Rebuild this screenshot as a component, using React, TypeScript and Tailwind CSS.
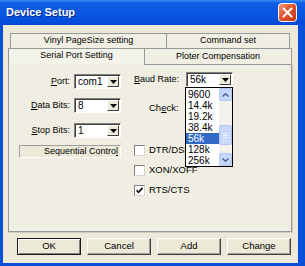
import React from "react";

const Combo = ({ value, width = "w-[47px]" }: { value: string; width?: string }) => (
  <div className={`flex h-[15px] ${width} items-stretch border border-t-[#808080] border-l-[#808080] border-b-white border-r-white bg-white shadow-[inset_1px_1px_0_#404040]`}>
    <div className="flex flex-1 items-center pl-[3px] text-[10px] leading-none text-black">{value}</div>
    <div className="m-px flex w-[12px] items-center justify-center border border-t-white border-l-white border-b-[#404040] border-r-[#404040] bg-[#ece9d8]">
      <svg width="7" height="4" viewBox="0 0 7 4">
        <path d="M0 0h7L3.5 4z" fill="#000" />
      </svg>
    </div>
  </div>
);

const Label = ({ k, rest }: { k: string; rest: string }) => (
  <span className="text-[9px] leading-none text-black">
    <span className="underline">{k}</span>
    {rest}
  </span>
);

const Check = ({ label, checked = false }: { label: string; checked?: boolean }) => (
  <div className="flex h-[11px] items-center gap-[4px]">
    <div className="flex h-[11px] w-[11px] items-center justify-center border border-t-[#808080] border-l-[#808080] border-b-[#d8d6cc] border-r-[#d8d6cc] bg-white">
      {checked && (
        <svg width="7" height="7" viewBox="0 0 7 7">
          <path d="M0.5 3.2l2 2.2L6.5 0.8" stroke="#000" strokeWidth="1.6" fill="none" />
        </svg>
      )}
    </div>
    <span className="text-[9.5px] leading-none text-black">{label}</span>
  </div>
);

const Button = ({ label, def = false }: { label: string; def?: boolean }) => (
  <div className={`flex h-[17px] w-[64px] items-center justify-center bg-[#ece9d8] text-[9.5px] text-black ${def ? "border border-[#1a1a1a] shadow-[inset_1px_1px_0_#fff,inset_-1px_-1px_0_#808080]" : "border border-t-white border-l-white border-b-[#404040] border-r-[#404040] shadow-[inset_-1px_-1px_0_#a0a0a0]"}`}>
    {label}
  </div>
);

const CloseIcon = () => (
  <svg width="19" height="19" viewBox="0 0 19 19">
    <defs>
      <linearGradient id="cl" x1="0" y1="0" x2="1" y2="1">
        <stop offset="0" stopColor="#f3a081" />
        <stop offset="0.45" stopColor="#e0542e" />
        <stop offset="1" stopColor="#bf3812" />
      </linearGradient>
    </defs>
    <rect x="0.5" y="0.5" width="18" height="18" rx="3" fill="url(#cl)" stroke="#ffffff" />
    <path d="M5.5 5.5l8 8M13.5 5.5l-8 8" stroke="#ffffff" strokeWidth="2" strokeLinecap="round" />
  </svg>
);

const bauds = ["9600", "14.4k", "19.2k", "38.4k", "56k", "128k", "256k"];

export default function App() {
  return (
    <div className="flex h-[266px] w-[305px] flex-col bg-[#0a4fd9] font-['Liberation_Sans',Arial,sans-serif]">
      {/* title bar */}
      <div className="flex h-[25px] items-center justify-between bg-[linear-gradient(#3a8cf7_0%,#0f5fe6_12%,#0755e2_60%,#0348d6_100%)] pl-[6px] pr-[8px]">
        <span className="text-[11px] font-bold text-white [text-shadow:1px_1px_0_#0a2a8a]">Device Setup</span>
        <CloseIcon />
      </div>

      {/* body */}
      <div className="mb-[3px] ml-[3px] flex w-[295px] flex-1 flex-col bg-[#ece9d8] pt-[8px]">
        {/* back tab row */}
        <div className="ml-[7px] flex h-[15px] w-[280px]">
          <div className="flex w-[157px] items-center justify-center border border-b-0 border-[#919b9c] bg-[#f1efe3] text-[9px] text-black">
            Vinyl PageSize setting
          </div>
          <div className="flex w-[123px] items-center justify-center border border-b-0 border-l-0 border-[#919b9c] bg-[#f1efe3] text-[9px] text-black">
            Command set
          </div>
        </div>
        {/* front tab row */}
        <div className="ml-[5px] flex h-[17px] w-[284px]">
          <div className="relative z-10 flex w-[137px] items-center justify-center border border-b-0 border-[#919b9c] bg-[#f4f3ea] pb-[2px] text-[9px] text-black">
            Serial Port Setting
          </div>
          <div className="flex w-[147px] items-center justify-center border border-l-0 border-[#919b9c] bg-[#f1efe3] text-[9px] text-black">
            Ploter Compensation
          </div>
        </div>

        {/* panel */}
        <div className="relative -mt-px ml-[5px] flex h-[168px] w-[284px] border border-[#919b9c] bg-[#f0eee2] shadow-[1px_1px_0_#d0cdbf]">
          {/* left column */}
          <div className="ml-[10px] mt-[9px] flex w-[102px] flex-col">
            <div className="flex h-[15px] items-center justify-end gap-[4px]">
              <Label k="P" rest="ort:" />
              <Combo value="com1" />
            </div>
            <div className="mt-[9px] flex h-[15px] items-center justify-end gap-[4px]">
              <Label k="D" rest="ata Bits:" />
              <Combo value="8" />
            </div>
            <div className="mt-[10px] flex h-[15px] items-center justify-end gap-[4px]">
              <Label k="S" rest="top Bits:" />
              <Combo value="1" />
            </div>
            <div className="mt-[7px] flex h-[13px] items-center justify-end border border-t-[#a0a0a0] border-l-[#a0a0a0] border-b-white border-r-white bg-[#ece9d8] pr-[2px] text-[9px] text-black">
              Sequential Contro<span className="underline">l</span>
            </div>
          </div>

          {/* right column */}
          <div className="ml-[13px] mt-[7px] flex flex-col">
            <div className="flex h-[15px] items-center">
              <span className="w-[52px] text-[9px] leading-none text-black">
                <span className="underline">B</span>aud Rate:
              </span>
              <Combo value="56k" />
            </div>
            <div className="ml-[15px] mt-[16px] text-[9.5px] leading-none text-black">
              Ch<span className="underline">e</span>ck:
            </div>
            <div className="mt-[32px] flex flex-col gap-[9px]">
              <Check label="DTR/DSR" />
              <Check label="XON/XOFF" />
              <Check label="RTS/CTS" checked />
            </div>
          </div>

          {/* open baud list */}
          <div className="absolute left-[176px] top-[22px] z-20 flex h-[80px] w-[48px] border border-black bg-white">
            <div className="flex flex-1 flex-col pt-px">
              {bauds.map((b) => (
                <div
                  key={b}
                  className={`flex h-[11px] items-center pl-[2px] text-[10px] leading-none ${b === "56k" ? "bg-[#316ac5] text-white" : "text-black"}`}
                >
                  {b}
                </div>
              ))}
            </div>
            <div className="flex w-[13px] flex-col bg-[#f3f1ec]">
              <div className="flex h-[13px] items-center justify-center rounded-[2px] border border-[#b4c8f6] bg-[#c6d6fc]">
                <svg width="7" height="4" viewBox="0 0 7 4">
                  <path d="M0.5 3.5L3.5 0.8 6.5 3.5" stroke="#4d6185" strokeWidth="1.4" fill="none" />
                </svg>
              </div>
              <div className="h-[24px]" />
              <div className="flex h-[20px] items-center justify-center rounded-[2px] border border-[#b4c8f6] bg-[#c8d8fc]">
                <div className="flex flex-col gap-px">
                  <div className="h-px w-[5px] bg-[#eef3fe]" />
                  <div className="h-px w-[5px] bg-[#eef3fe]" />
                  <div className="h-px w-[5px] bg-[#eef3fe]" />
                </div>
              </div>
              <div className="flex-1" />
              <div className="flex h-[13px] items-center justify-center rounded-[2px] border border-[#b4c8f6] bg-[#c6d6fc]">
                <svg width="7" height="4" viewBox="0 0 7 4">
                  <path d="M0.5 0.5L3.5 3.2 6.5 0.5" stroke="#4d6185" strokeWidth="1.4" fill="none" />
                </svg>
              </div>
            </div>
          </div>
        </div>

        {/* buttons */}
        <div className="ml-[14px] mt-[6px] flex gap-[6px]">
          <Button label="OK" def />
          <Button label="Cancel" />
          <Button label="Add" />
          <Button label="Change" />
        </div>
      </div>
    </div>
  );
}
